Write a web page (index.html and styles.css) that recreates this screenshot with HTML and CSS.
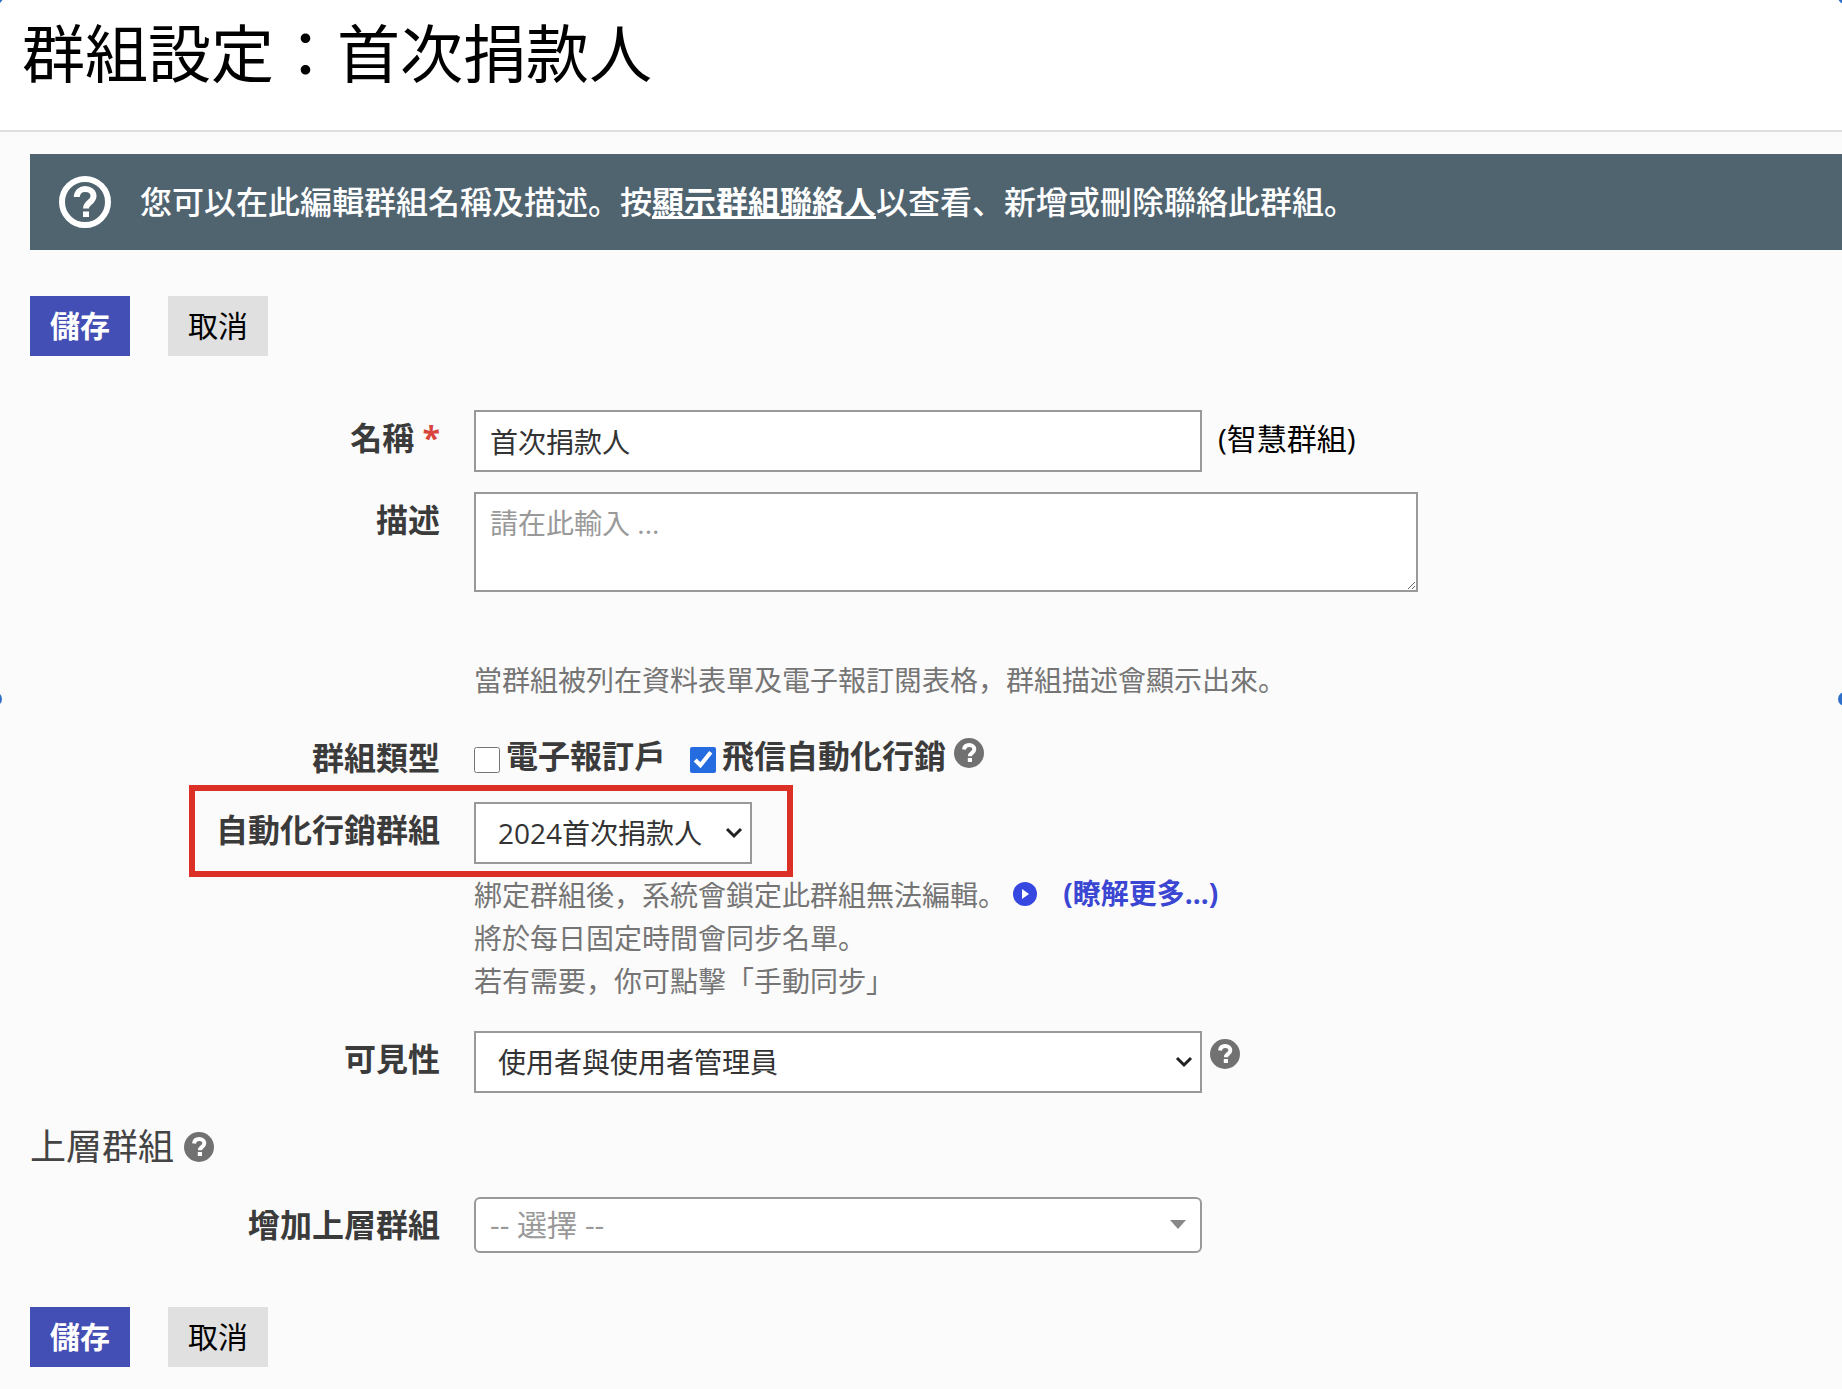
FILE: index.html
```html
<!DOCTYPE html>
<html lang="zh-Hant">
<head>
<meta charset="utf-8">
<meta name="viewport" content="width=device-width, initial-scale=1">
<title>群組設定：首次捐款人</title>
<link rel="stylesheet" href="styles.css">
</head>
<body>
<svg class="sprite" aria-hidden="true">
  <symbol id="icon-help" viewBox="0 0 30 30">
    <circle cx="15" cy="15" r="15" fill="#717171"/>
    <path d="M10 11.600c.4-3 2.400-4.600 5.200-4.600 3 0 5.100 1.700 5.100 4.300 0 3.500-4.400 3.500-4.400 6.900" fill="none" stroke="#fff" stroke-width="4"/>
    <rect x="13.800" y="20" width="4.200" height="4" fill="#fff"/>
  </symbol>
  <symbol id="icon-chevron" viewBox="0 0 18 12">
    <path d="M2 2l7 7 7-7" fill="none" stroke="#222" stroke-width="3"/>
  </symbol>
</svg>

<header class="page-header">
  <h1 class="page-title">群組設定：首次捐款人</h1>
</header>

<main class="page-body">
  <div class="notice">
    <svg class="notice-icon" viewBox="0 0 52 52" aria-hidden="true">
      <circle cx="26" cy="26" r="23" fill="none" stroke="#fff" stroke-width="6"/>
      <path d="M17.800 21c.2-5 3.700-8 8.400-8 4.800 0 8.300 3 8.300 7.200 0 5.800-7.500 6.300-7.500 12.200" fill="none" stroke="#fff" stroke-width="6"/>
      <rect x="24" y="35.500" width="6" height="5.500" fill="#fff"/>
    </svg>
    <p class="notice-text">您可以在此編輯群組名稱及描述。按<a class="notice-link" href="#contacts">顯示群組聯絡人</a>以查看、新增或刪除聯絡此群組。</p>
  </div>

  <form class="group-form">
    <div class="buttons">
      <button class="button button-primary" type="submit">儲存</button>
      <button class="button" type="button">取消</button>
    </div>

    <div class="row row-name">
      <label class="label" for="name">名稱 <span class="required">*</span></label>
      <div class="field field-inline">
        <input class="control control-wide" id="name" type="text" value="首次捐款人">
        <span class="note">(智慧群組)</span>
      </div>
    </div>

    <div class="row row-description">
      <label class="label" for="description">描述</label>
      <div class="field">
        <textarea class="control control-area" id="description" placeholder="請在此輸入 ..."></textarea>
        <p class="help help-spaced">當群組被列在資料表單及電子報訂閱表格，群組描述會顯示出來。</p>
      </div>
    </div>

    <div class="row row-type" role="group" aria-labelledby="type-label">
      <span class="label" id="type-label">群組類型</span>
      <div class="field checks">
        <label class="check"><input class="check-box" type="checkbox">電子報訂戶</label>
        <label class="check"><input class="check-box" type="checkbox" checked>飛信自動化行銷</label>
        <svg class="help-icon help-icon-check" role="img" aria-label="說明"><use href="#icon-help"/></svg>
      </div>
    </div>

    <div class="row row-automation">
      <label class="label" for="automation">自動化行銷群組</label>
      <div class="field">
        <div class="select select-short">
          <select class="control control-select" id="automation"><option>2024首次捐款人</option></select>
          <svg class="chevron" aria-hidden="true"><use href="#icon-chevron"/></svg>
        </div>
        <div class="help help-lines">
          <p class="help-line">綁定群組後，系統會鎖定此群組無法編輯。
            <a class="more" href="#more">
              <svg class="more-icon" viewBox="0 0 24 24" aria-hidden="true"><circle cx="12" cy="12" r="12" fill="#3648df"/><path d="M9 7l7 5-7 5z" fill="#fff"/></svg>
              <span>(瞭解更多...)</span>
            </a>
          </p>
          <p class="help-line">將於每日固定時間會同步名單。</p>
          <p class="help-line">若有需要，你可點擊「手動同步」</p>
        </div>
      </div>
      <div class="highlight"></div>
    </div>

    <div class="row row-visibility">
      <label class="label" for="visibility">可見性</label>
      <div class="field field-help">
        <div class="select select-wide">
          <select class="control control-select" id="visibility"><option>使用者與使用者管理員</option></select>
          <svg class="chevron" aria-hidden="true"><use href="#icon-chevron"/></svg>
        </div>
        <svg class="help-icon help-icon-select" role="img" aria-label="說明"><use href="#icon-help"/></svg>
      </div>
    </div>

    <h2 class="section-title">上層群組
      <svg class="help-icon" role="img" aria-label="說明"><use href="#icon-help"/></svg>
    </h2>

    <div class="row row-parent">
      <label class="label" for="parent">增加上層群組</label>
      <div class="field">
        <div class="select select-wide">
          <select class="control control-select control-rounded" id="parent"><option>-- 選擇 --</option></select>
          <svg class="triangle" viewBox="0 0 16 9" aria-hidden="true"><path d="M0 0h16l-8 9z" fill="#888"/></svg>
        </div>
      </div>
    </div>

    <div class="buttons">
      <button class="button button-primary" type="submit">儲存</button>
      <button class="button" type="button">取消</button>
    </div>
  </form>
</main>

<i class="handle handle-top-left"></i>
<i class="handle handle-top-right"></i>
<i class="handle handle-left"></i>
<i class="handle handle-right"></i>
</body>
</html>
```

FILE: styles.css
```css
* {
  box-sizing: border-box;
}

body {
  position: relative;
  min-height: 100vh;
  margin: 0;
  overflow-x: hidden;
  background: #fbfbfb;
  color: #3b3b3b;
  font-family: "Open Sans", "Noto Sans CJK JP", sans-serif;
  font-feature-settings: "locl" 0;
  font-size: 28px;
  line-height: 44px;
}

p,
h1,
h2 {
  margin: 0;
}

.sprite {
  position: absolute;
  width: 0;
  height: 0;
}

.page-header {
  padding: 8px 22px 32px;
  border-bottom: 2px solid #dedede;
  background: #fff;
}

.page-title {
  color: #000;
  font-size: 63px;
  font-weight: 400;
  line-height: 90px;
}

.page-body {
  padding: 22px 0 20px 30px;
}

.notice {
  display: flex;
  align-items: center;
  gap: 29px;
  min-height: 96px;
  padding: 0 29px;
  background: #506470;
  color: #fff;
}

.notice-icon {
  flex: none;
  width: 52px;
  height: 52px;
}

.notice-text {
  font-size: 32px;
  font-weight: 500;
}

.notice-link {
  color: #fff;
  font-weight: 700;
}

.group-form {
  padding-top: 46px;
}

.buttons {
  display: flex;
  gap: 38px;
}

.button {
  width: 100px;
  height: 60px;
  padding: 0;
  border: 0;
  background: #e0e0e0;
  color: #000;
  font: inherit;
  font-size: 30px;
}

.button-primary {
  background: #434fb4;
  color: #fff;
  font-weight: 700;
}

.row {
  position: relative;
  display: grid;
  grid-template-columns: 410px 1fr;
  column-gap: 34px;
  align-items: start;
}

.row-name {
  margin-top: 54px;
}

.row-description {
  margin-top: 20px;
}

.row-type {
  margin-top: 28px;
}

.row-automation {
  margin-top: 16px;
}

.row-visibility {
  margin-top: 28px;
}

.row-parent {
  margin: 28px 0 54px;
}

.label {
  font-size: 32px;
  font-weight: 700;
  line-height: 56px;
  text-align: right;
}

.required {
  color: #d9453d;
}

.field-inline {
  display: flex;
  align-items: center;
  gap: 16px;
}

.field-help {
  display: flex;
  gap: 8px;
}

.control {
  display: block;
  width: 100%;
  height: 62px;
  margin: 0;
  padding: 0 14px;
  border: 2px solid #999;
  border-radius: 0;
  background: #fff;
  color: #333;
  font: inherit;
}

.control-wide,
.select-wide {
  width: 100%;
  max-width: 728px;
}

.control-area {
  max-width: 944px;
  height: 100px;
  padding: 7px 14px;
}

.control-area::placeholder {
  color: #999;
}

.note {
  padding-bottom: 4px;
  color: #000;
  font-size: 30px;
}

.help {
  color: #757575;
}

.help-spaced {
  margin-top: 66px;
}

.help-lines {
  margin-top: 8px;
}

.help-line {
  line-height: 43px;
}

.checks {
  display: flex;
  font-size: 32px;
  font-weight: 700;
  line-height: 52px;
}

.check {
  display: flex;
  align-items: center;
  gap: 6px;
  margin-right: 24px;
}

.check + .check {
  margin-right: 8px;
}

.check-box {
  width: 26px;
  height: 26px;
  margin: 8px 0 0;
  accent-color: #256ce1;
}

.help-icon {
  flex: none;
  width: 30px;
  height: 30px;
}

.help-icon-check,
.help-icon-select {
  margin-top: 8px;
}

.select {
  display: grid;
  align-items: center;
}

.select > * {
  grid-area: 1 / 1;
}

.select-short {
  width: 278px;
}

.control-select {
  padding: 0 22px;
  appearance: none;
}

.control-rounded {
  height: 56px;
  padding: 0 14px;
  border-radius: 6px;
  color: #999;
  font-size: 30px;
}

.chevron,
.triangle {
  justify-self: end;
  pointer-events: none;
}

.chevron {
  width: 18px;
  height: 12px;
  margin-right: 9px;
}

.triangle {
  width: 16px;
  height: 9px;
  margin-right: 16px;
}

.more {
  display: inline-flex;
  align-items: center;
  gap: 26px;
  color: #3b46d2;
  font-weight: 700;
  text-decoration: none;
}

.more-icon {
  width: 24px;
  height: 24px;
}

.highlight {
  position: absolute;
  top: -17px;
  left: 159px;
  width: 604px;
  height: 92px;
  border: 6px solid #dc3026;
  pointer-events: none;
}

.section-title {
  display: flex;
  align-items: center;
  gap: 10px;
  margin-top: 32px;
  color: #444;
  font-size: 36px;
  font-weight: 400;
}

.handle {
  position: absolute;
  width: 14px;
  height: 14px;
  border-radius: 50%;
  background: #2f6fc9;
}

.handle-top-left {
  top: -10px;
  left: -11px;
}

.handle-top-right {
  top: -10px;
  right: -10px;
}

.handle-left {
  top: 692px;
  left: -12px;
}

.handle-right {
  top: 692px;
  right: -10px;
}
```
